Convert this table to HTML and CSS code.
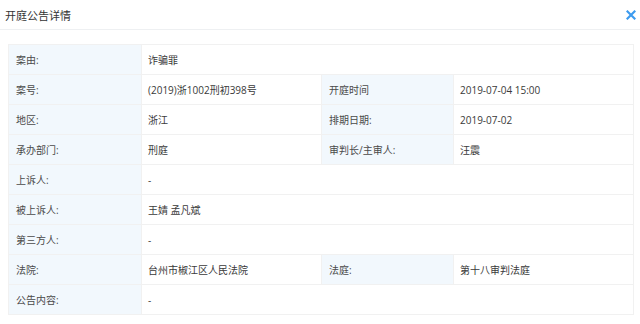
FILE: index.html
```html
<!DOCTYPE html>
<html lang="zh-CN">
<head>
  <meta charset="UTF-8">
  <title>开庭公告详情</title>
  <link rel="stylesheet" href="styles.css">
</head>
<body>
  <div class="dialog">
    <div class="dialog-head">
      <span class="dialog-title">开庭公告详情</span>
      <span class="dialog-close">
        <svg width="10" height="10" viewBox="0 0 10 10"><path d="M1.5 1.5L8.5 8.5M8.5 1.5L1.5 8.5" stroke="#3d9bef" stroke-width="2.2" stroke-linecap="square"/></svg>
      </span>
    </div>
    <div class="dialog-body">
      <table class="detail">
        <colgroup>
          <col class="c-label"><col class="c-value"><col class="c-label2"><col class="c-value">
        </colgroup>
        <tr><td class="lbl">案由:</td><td colspan="3">诈骗罪</td></tr>
        <tr><td class="lbl">案号:</td><td>(2019)浙1002刑初398号</td><td class="lbl">开庭时间</td><td>2019-07-04 15:00</td></tr>
        <tr><td class="lbl">地区:</td><td>浙江</td><td class="lbl">排期日期:</td><td>2019-07-02</td></tr>
        <tr><td class="lbl">承办部门:</td><td>刑庭</td><td class="lbl">审判长/主审人:</td><td>汪震</td></tr>
        <tr><td class="lbl">上诉人:</td><td colspan="3">-</td></tr>
        <tr><td class="lbl">被上诉人:</td><td colspan="3">王婧 孟凡斌</td></tr>
        <tr><td class="lbl">第三方人:</td><td colspan="3">-</td></tr>
        <tr><td class="lbl">法院:</td><td>台州市椒江区人民法院</td><td class="lbl">法庭:</td><td>第十八审判法庭</td></tr>
        <tr><td class="lbl">公告内容:</td><td colspan="3">-</td></tr>
      </table>
    </div>
  </div>
</body>
</html>
```

FILE: styles.css
```css
body { margin:0; background:#fff; font-family:"Open Sans","Noto Sans CJK SC",sans-serif; color:#3a3a3a; }
.dialog-head { display:flex; justify-content:space-between; align-items:center; height:29px; padding:0 4px 0 5px; border-bottom:1px solid #eef0f2; }
.dialog-title { font-size:11px; color:#333; }
.dialog-close { display:flex; width:10px; height:10px; }
.dialog-body { padding:14px 7px 0 8px; }
table.detail { width:100%; table-layout:fixed; border-collapse:collapse; border:1px solid #f1f1f1; font-size:10px; }
col.c-label { width:133px; }
col.c-value { width:180px; }
col.c-label2 { width:132px; }
table.detail td { height:29px; padding:0 0 0 6px; border:1px solid #f1f1f1; white-space:nowrap; vertical-align:middle; }
table.detail td.lbl { background:#f2f8fd; padding-left:7px; color:#4a4a4a; }
```
